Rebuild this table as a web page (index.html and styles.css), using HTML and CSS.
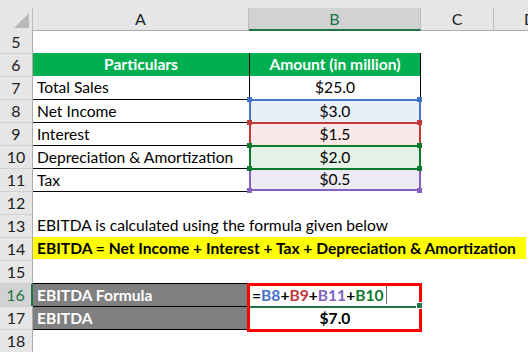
FILE: index.html
```html
<!DOCTYPE html>
<html>
<head>
<meta charset="utf-8">
<link rel="stylesheet" href="styles.css">
</head>
<body>
<div class="sheet">
  <div class="colhead">
    <div class="corner"><span class="tri"></span></div>
    <div class="ch">A</div>
    <div class="ch sel">B</div>
    <div class="ch">C</div>
    <div class="ch">D</div>
  </div>

  <div class="r"><div class="rh">5</div></div>

  <div class="r">
    <div class="rh">6</div>
    <div class="c hd">Particulars</div>
    <div class="c hd hd-b">Amount (in million)</div>
  </div>

  <div class="r">
    <div class="rh">7</div>
    <div class="c">Total Sales</div>
    <div class="c tb">$25.0</div>
  </div>

  <div class="r">
    <div class="rh">8</div>
    <div class="c ta">Net Income</div>
    <div class="c rng rng-blue">$3.0</div>
  </div>

  <div class="r">
    <div class="rh">9</div>
    <div class="c ta">Interest</div>
    <div class="c rng rng-red">$1.5</div>
  </div>

  <div class="r">
    <div class="rh">10</div>
    <div class="c ta">Depreciation &amp; Amortization</div>
    <div class="c rng rng-green">$2.0</div>
  </div>

  <div class="r">
    <div class="rh">11</div>
    <div class="c ta">Tax</div>
    <div class="c rng rng-purple">$0.5</div>
  </div>

  <div class="r">
    <div class="rh">12</div>
    <div class="c ta"></div>
  </div>

  <div class="r">
    <div class="rh">13</div>
    <div class="c span">EBITDA is calculated using the formula given below</div>
  </div>

  <div class="r">
    <div class="rh">14</div>
    <div class="c span yellow">EBITDA = Net Income + Interest + Tax + Depreciation &amp; Amortization</div>
  </div>

  <div class="r"><div class="rh">15</div></div>

  <div class="r">
    <div class="rh rh-sel">16</div>
    <div class="c gray ta">EBITDA Formula</div>
    <div class="c formula"><span class="f-eq">=</span><span class="f-blue">B8</span><span class="f-eq">+</span><span class="f-red">B9</span><span class="f-eq">+</span><span class="f-purple">B11</span><span class="f-eq">+</span><span class="f-green">B10</span><span class="cursor"></span></div>
  </div>

  <div class="r">
    <div class="rh">17</div>
    <div class="c gray ta">EBITDA</div>
    <div class="c result">$7.0</div>
  </div>

  <div class="r">
    <div class="rh">18</div>
    <div class="c ta"></div>
  </div>
</div>
</body>
</html>
```

FILE: styles.css
```css
html, body {
  margin: 0;
  padding: 0;
  background: #ffffff;
  overflow: hidden;
}

body {
  width: 528px;
  height: 352px;
  font-family: Lato, "Liberation Sans", sans-serif;
  font-size: 15.6px;
  color: #000;
}

.sheet {
  width: 567px;
}

.colhead {
  display: grid;
  grid-template-columns: 33px 216px 172px 73px 73px;
  height: 30px;
  padding-top: 8px;
  box-sizing: border-box;
  background: #e6e6e6;
}

.corner {
  box-sizing: border-box;
  border-right: 1px solid #bcbcbc;
  border-bottom: 1px solid #ababab;
  display: flex;
  justify-content: flex-end;
  align-items: flex-end;
  padding: 0 3px 2px 0;
}

.tri {
  width: 15px;
  height: 15px;
  background: #b9b9b9;
  clip-path: polygon(100% 0, 100% 100%, 0 100%);
}

.ch {
  box-sizing: border-box;
  border-right: 1px solid #bcbcbc;
  border-bottom: 1px solid #ababab;
  text-align: center;
  line-height: 21px;
  color: #222;
  font-size: 16px;
}

.ch.sel {
  background: #d2d2d2;
  color: #217346;
  border-bottom: 2px solid #217346;
}

.r {
  display: grid;
  grid-template-columns: 33px 216px 172px 73px 73px;
  height: 23px;
}

.rh {
  box-sizing: border-box;
  background: #e6e6e6;
  border-right: 1px solid #ababab;
  text-align: center;
  line-height: 23px;
  color: #222;
  font-size: 16px;
}

.r + .r .rh {
  border-top: 1px solid #d0d0d0;
  line-height: 22px;
}

.r .rh.rh-sel {
  background: #d2d2d2;
  color: #217346;
  border-right: 2px solid #217346;
}

.c {
  box-sizing: border-box;
  padding: 0 4px;
  white-space: nowrap;
  line-height: 22px;
}

.hd {
  background: #00b050;
  color: #fff;
  font-weight: bold;
  text-align: center;
}

.hd-b,
.tb {
  border-left: 1px solid #000;
  border-right: 1px solid #000;
  text-align: center;
}

.ta {
  border-top: 1px solid #000;
}

.rng {
  position: relative;
  text-align: center;
  border-top: 2px solid;
  border-left: 2px solid;
  border-right: 2px solid;
  line-height: 20px;
}

.rng::before {
  content: "";
  position: absolute;
  left: -4px;
  top: -4px;
  width: 5px;
  height: 5px;
  background: var(--hc);
  box-shadow: 170px 0 0 var(--hc);
  z-index: 1;
}

.rng-blue {
  border-color: #4472c4;
  background: #e9eff8;
  --hc: #4472c4;
}

.rng-red {
  border-color: #c0393b;
  background: #fbe9e9;
  --hc: #c0393b;
}

.rng-green {
  border-color: #0b7a2c;
  background: #e4f1e6;
  --hc: #0b7a2c;
}

.rng-purple {
  border-color: #0b7a2c #8661c1 #8661c1 #8661c1;
  border-bottom: 2px solid #8661c1;
  background: #efebf6;
  --hc: #0b7a2c;
  line-height: 18px;
}

.rng-purple::after {
  content: "";
  position: absolute;
  left: -4px;
  bottom: -4px;
  width: 5px;
  height: 5px;
  background: #8661c1;
  box-shadow: 170px 0 0 #8661c1;
}

.span {
  grid-column: 2 / -1;
}

.yellow {
  background: #ffff00;
  font-weight: bold;
  margin-right: 41px;
  border-bottom: 1px solid #fff;
}

.gray {
  background: #808080;
  color: #fff;
  font-weight: bold;
}

.formula {
  position: relative;
  border-left: 1px solid #000;
  border-right: 1px solid #000;
  font-weight: bold;
  padding-left: 2px;
  display: flex;
  align-items: center;
}

.formula::before {
  content: "";
  position: absolute;
  left: -3px;
  top: 0;
  width: 175px;
  height: 49px;
  box-sizing: border-box;
  border: 3px solid #ff0000;
  z-index: 2;
}

.formula::after {
  content: "";
  position: absolute;
  right: -3px;
  bottom: -3px;
  width: 5px;
  height: 5px;
  background: #217346;
  border: 1px solid #fff;
  z-index: 3;
}

.f-eq { color: #000; }
.f-blue { color: #4472c4; }
.f-red { color: #c0393b; }
.f-purple { color: #8661c1; }
.f-green { color: #0b7a2c; }

.cursor {
  display: inline-block;
  width: 1px;
  height: 19px;
  background: #6b6b6b;
  margin-left: 2px;
}

.result {
  border-left: 1px solid #000;
  border-right: 1px solid #000;
  border-top: 2px solid #217346;
  font-weight: bold;
  text-align: center;
  line-height: 20px;
}
```
